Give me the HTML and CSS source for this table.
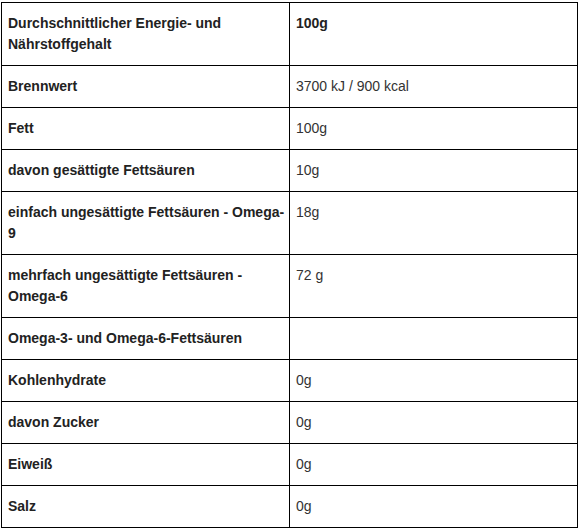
FILE: index.html
```html
<!DOCTYPE html>
<html lang="de">
<head>
<meta charset="utf-8">
<title>Nährwerte</title>
<link rel="stylesheet" href="styles.css">
</head>
<body>
<table class="nutrition">
  <colgroup><col class="col-label"><col class="col-value"></colgroup>
  <tbody>
    <tr><th>Durchschnittlicher Energie- und Nährstoffgehalt</th><td class="head">100g</td></tr>
    <tr><th>Brennwert</th><td>3700 kJ / 900 kcal</td></tr>
    <tr><th>Fett</th><td>100g</td></tr>
    <tr><th>davon gesättigte Fettsäuren</th><td>10g</td></tr>
    <tr><th>einfach ungesättigte Fettsäuren - Omega-9</th><td>18g</td></tr>
    <tr><th>mehrfach ungesättigte Fettsäuren - Omega-6</th><td>72 g</td></tr>
    <tr><th>Omega-3- und Omega-6-Fettsäuren</th><td></td></tr>
    <tr><th>Kohlenhydrate</th><td>0g</td></tr>
    <tr><th>davon Zucker</th><td>0g</td></tr>
    <tr><th>Eiweiß</th><td>0g</td></tr>
    <tr><th>Salz</th><td>0g</td></tr>
  </tbody>
</table>
</body>
</html>
```
FILE: styles.css
```css
html, body {
  margin: 0;
  padding: 0;
  background: #fff;
}
body {
  padding: 2px 0 0 1px;
  font-family: "Liberation Sans", Arial, sans-serif;
  font-size: 14px;
  line-height: 21px;
  color: #333;
}
.nutrition {
  border-collapse: collapse;
  width: 577px;
  table-layout: fixed;
}
.col-label,
.col-value {
  width: 288px;
}
.nutrition th,
.nutrition td {
  border: 1px solid #000;
  padding: 10px 6px 10px 6px;
  vertical-align: top;
  text-align: left;
}
.nutrition th {
  font-weight: bold;
  color: #222;
  padding-right: 1px;
}
.nutrition td {
  font-weight: normal;
}
.nutrition td.head {
  font-weight: bold;
  color: #222;
}
```
